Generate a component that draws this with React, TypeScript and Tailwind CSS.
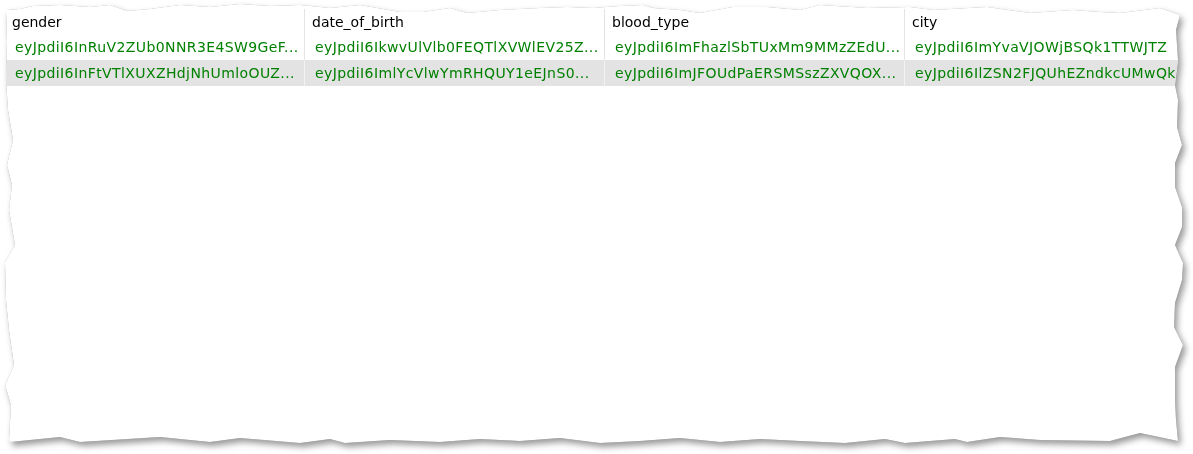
import React from 'react';

const columns = ['gender', 'date_of_birth', 'blood_type', 'city'];

const rows = [
  [
    'eyJpdiI6InRuV2ZUb0NNR3E4SW9GeF...',
    'eyJpdiI6IkwvUlVlb0FEQTlXVWlEV25Z...',
    'eyJpdiI6ImFhazlSbTUxMm9MMzZEdU...',
    'eyJpdiI6ImYvaVJOWjBSQk1TTWJTZ',
  ],
  [
    'eyJpdiI6InFtVTlXUXZHdjNhUmloOUZ...',
    'eyJpdiI6ImlYcVlwYmRHQUY1eEJnS0...',
    'eyJpdiI6ImJFOUdPaERSMSszZXVQOX...',
    'eyJpdiI6IlZSN2FJQUhEZndkcUMwQk',
  ],
];

export default function App() {
  return (
    <div className="w-[1193px] h-[454px] bg-white overflow-hidden font-['DejaVu_Sans',sans-serif]">
      <div className="[filter:drop-shadow(0_0_0.5px_rgba(0,0,0,0.35))_drop-shadow(3px_4px_3px_rgba(0,0,0,0.4))]">
        <div className="w-[1193px] h-[454px] bg-white pt-[9px] pl-[5px] [clip-path:polygon(6px_10px,20px_9px,33px_6px,60px_5px,90px_7px,110px_5px,127px_11px,150px_9px,180px_5px,210px_7px,240px_4px,270px_6px,300px_5px,330px_8px,360px_5px,400px_12px,423px_12px,450px_8px,467px_13px,500px_10px,540px_8px,567px_7px,593px_8px,620px_6px,643px_5px,653px_8px,680px_10px,700px_13px,733px_7px,767px_7px,800px_10px,820px_5px,867px_8px,910px_7px,933px_10px,987px_7px,1030px_13px,1073px_10px,1100px_12px,1120px_13px,1160px_8px,1180px_15px,1176px_30px,1178px_60px,1175px_85px,1178px_100px,1177px_127px,1182px_145px,1175px_163px,1175px_187px,1182px_207px,1182px_227px,1175px_245px,1183px_263px,1182px_280px,1175px_303px,1174px_327px,1183px_345px,1175px_367px,1175px_400px,1176px_420px,1178px_441px,1140px_433px,1110px_441px,1040px_440px,1000px_437px,967px_442px,955px_439px,905px_443px,885px_439px,845px_443px,800px_441px,760px_439px,720px_442px,680px_438px,640px_441px,600px_443px,560px_438px,520px_441px,480px_439px,440px_442px,390px_440px,345px_443px,330px_439px,300px_443px,240px_438px,210px_442px,160px_437px,80px_442px,60px_437px,10px_442px,9px_440px,11px_405px,5px_385px,14px_365px,9px_330px,6px_300px,5px_262px,15px_245px,9px_210px,12px_185px,7px_165px,13px_140px,8px_110px,6px_80px,7px_40px,6px_10px)]">
          {/* header */}
          <div className="flex h-[26px] text-[14px] text-black">
            {columns.map((c) => (
              <div key={c} className="w-[300px] shrink-0 border-r border-[#e4e4e4] pl-[7px] flex items-center whitespace-nowrap overflow-hidden">
                {c}
              </div>
            ))}
          </div>
          {rows.map((r, i) => (
            <div key={i} className={`flex text-[14px] tracking-[0.4px] text-[#008000] ${i === 1 ? 'h-[26px] bg-[#e3e3e3]' : 'h-[25px]'}`}>
              {r.map((v, j) => (
                <div
                  key={j}
                  className={`w-[300px] shrink-0 border-r pl-[10px] flex items-center whitespace-nowrap overflow-hidden ${i === 1 ? 'border-[#f2f2f2]' : 'border-[#e4e4e4]'}`}
                >
                  {v}
                </div>
              ))}
            </div>
          ))}
        </div>
      </div>
    </div>
  );
}
